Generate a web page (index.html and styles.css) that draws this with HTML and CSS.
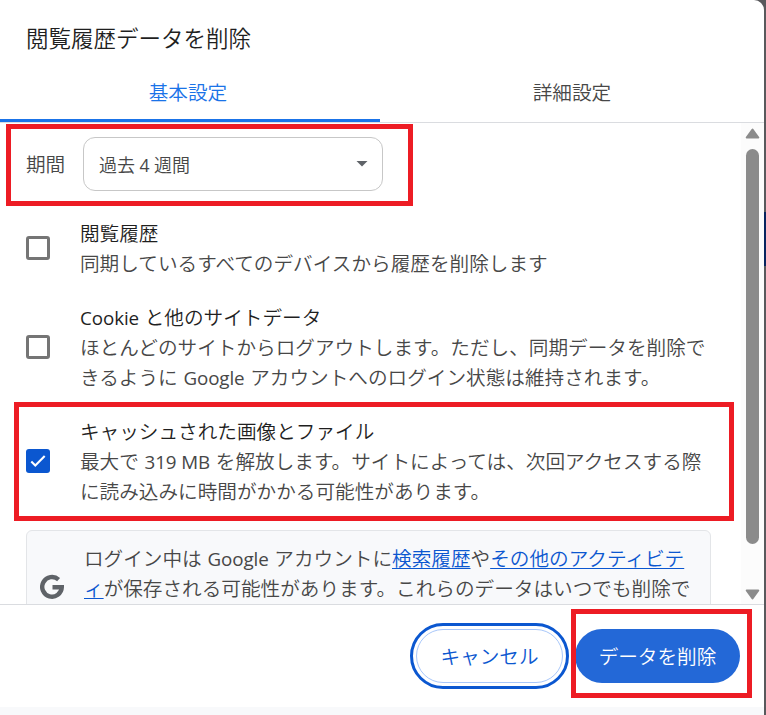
FILE: index.html
```html
<!DOCTYPE html>
<html lang="ja">
<head>
<meta charset="utf-8">
<title>閲覧履歴データを削除</title>
<link rel="stylesheet" href="styles.css">
</head>
<body>
<div class="backdrop">
  <main class="dialog">
    <h1 class="title">閲覧履歴データを削除</h1>
    <nav class="tabs">
      <div class="tab tab-active">基本設定</div>
      <div class="tab">詳細設定</div>
    </nav>
    <div class="body">
      <div class="content">
        <div class="period">
          <span class="period-label">期間</span>
          <div class="select"><span>過去 <span class="latin">4</span> 週間</span>
            <svg width="12" height="6" viewBox="0 0 12 6"><path d="M.5 0h11L6 5.5z" fill="#5f6368"/></svg>
          </div>
        </div>
        <div class="option">
          <span class="check"></span>
          <div><div class="name">閲覧履歴</div><div>同期しているすべてのデバイスから履歴を削除します</div></div>
        </div>
        <div class="option">
          <span class="check"></span>
          <div><div class="name"><span class="latin">Cookie</span> と他のサイトデータ</div><div>ほとんどのサイトからログアウトします。ただし、同期データを削除で<br>きるように <span class="latin">Google</span> アカウントへのログイン状態は維持されます。</div></div>
        </div>
        <div class="option">
          <span class="check check-on"><svg width="24" height="24" viewBox="0 0 24 24"><path d="M5.3 12.6l4 4L18.7 7" fill="none" stroke="#fff" stroke-width="2.1"/></svg></span>
          <div><div class="name">キャッシュされた画像とファイル</div><div>最大で <span class="latin">319 MB</span> を解放します。サイトによっては、次回アクセスする際<br>に読み込みに時間がかかる可能性があります。</div></div>
        </div>
        <div class="notice">
          <svg class="g-icon" width="24" height="25" viewBox="0 0 24 25"><path d="M18.6 5.6A9.8 9.8 0 1 0 21.8 13.2H12.5" fill="none" stroke="#5f6368" stroke-width="4.4"/></svg>
          <div>ログイン中は <span class="latin">Google</span> アカウントに<a>検索履歴</a>や<a>その他のアクティビテ<br>ィ</a>が保存される可能性があります。これらのデータはいつでも削除で</div>
        </div>
      </div>
      <div class="scrollbar">
        <svg width="15" height="11" viewBox="0 0 15 11"><path d="M7.5 1.5L13.3 9.5H1.7z" fill="#8b8b8b" stroke="#8b8b8b" stroke-width="2" stroke-linejoin="round"/></svg>
        <div class="thumb"></div>
        <svg width="15" height="11" viewBox="0 0 15 11"><path d="M7.5 9.5L13.3 1.5H1.7z" fill="#8b8b8b" stroke="#8b8b8b" stroke-width="2" stroke-linejoin="round"/></svg>
      </div>
    </div>
    <footer class="actions">
      <div class="button cancel">キャンセル</div>
      <div class="button confirm">データを削除</div>
    </footer>
    <div class="below"></div>
  </main>
  <div class="page-edge"></div>
  <div class="mark mark-period"></div>
  <div class="mark mark-cache"></div>
  <div class="mark mark-confirm"></div>
</div>
</body>
</html>
```
FILE: styles.css
```css
* { box-sizing: border-box; }
body {
  margin: 0;
  font-family: "Noto Sans CJK JP", sans-serif;
  font-size: 19.64px;
  font-weight: 350;
  line-height: 30px;
  word-spacing: 1.3px;
  color: #474747;
  overflow: hidden;
}
svg { display: block; }
.latin { font-family: "Open Sans", sans-serif; font-weight: 370; font-size: 18.8px; line-height: 1; letter-spacing: -.1px; word-spacing: 0; }
.backdrop { position: relative; display: flex; width: 766px; height: 715px; background: #59595c; overflow: hidden; }
.dialog { width: 764px; height: 715px; background: #fff; border-top-right-radius: 10px; display: flex; flex-direction: column; overflow: hidden; }
.title { margin: 0; padding: 21px 26px 0; height: 62px; font-size: 22.5px; line-height: 32px; font-weight: 350; color: #1f1f1f; }
.tabs { display: flex; height: 61px; border-bottom: 1px solid #dadce0; }
.tab { flex: 0 0 380px; text-align: center; line-height: 60px; }
.tab + .tab { flex-basis: 384px; }
.tab-active { color: #1a73e8; padding-right: 4px; box-shadow: inset 0 -3px #1a73e8; border-top-right-radius: 3px; }
.body { display: flex; height: 481px; overflow: hidden; }
.content { width: 741px; padding: 14px 30px 0 26px; }
.period { display: flex; align-items: center; height: 54px; margin-bottom: 27px; }
.period-label { width: 57px; }
.select { width: 300px; height: 54px; border: 1px solid #c7c7c7; border-radius: 12px; padding: 0 14px 0 15px; display: flex; align-items: center; justify-content: space-between; font-size: 18px; word-spacing: .5px; }
.select .latin { font-size: 17.5px; }
.option { display: flex; align-items: center; margin-bottom: 24px; white-space: nowrap; }
.check { flex: none; width: 24px; height: 24px; margin-right: 30px; border: 3px solid #757575; border-radius: 3px; }
.check-on { border: 0; background: #0b57d0; }
.name { color: #1f1f1f; }
.notice { display: flex; align-items: flex-start; width: 685px; height: 113px; padding: 12px 13px 0; background: #f8f9fb; border: 1px solid #e3e5e8; border-radius: 6px; white-space: nowrap; }
.g-icon { flex: none; margin: 31px 20px 0 0; }
.notice a { color: #0b57d0; text-decoration: underline; text-decoration-thickness: 1px; text-underline-offset: 2px; }
.scrollbar { width: 23px; padding: 5px 0 4px; background: #fcfcfc; display: flex; flex-direction: column; align-items: center; }
.thumb { width: 13px; height: 395px; margin: 10px 0 45px; border-radius: 7px; background: #8b8b8b; }
.actions { height: 103px; border-top: 1px solid #dadce0; display: flex; justify-content: flex-end; padding: 24px 24px 0 0; gap: 12px; }
.button { height: 54px; border-radius: 27px; text-align: center; line-height: 54px; }
.cancel { width: 147px; border: 1px solid #a8c7fa; color: #0b57d0; line-height: 52px; outline: 3px solid #0b57d0; outline-offset: 3px; }
.confirm { width: 165px; background: #2368d7; color: #fff; }
.below { flex: 1; background: #f8f9fb; }
.page-edge { width: 2px; height: 54px; margin-top: 212px; background: #08245f; }
.mark { position: absolute; border: 5px solid #ed1c24; }
.mark-period { left: 6px; top: 124px; width: 407px; height: 82px; }
.mark-cache { left: 14px; top: 402px; width: 720px; height: 119px; }
.mark-confirm { left: 571px; top: 609px; width: 181px; height: 89px; }
```
